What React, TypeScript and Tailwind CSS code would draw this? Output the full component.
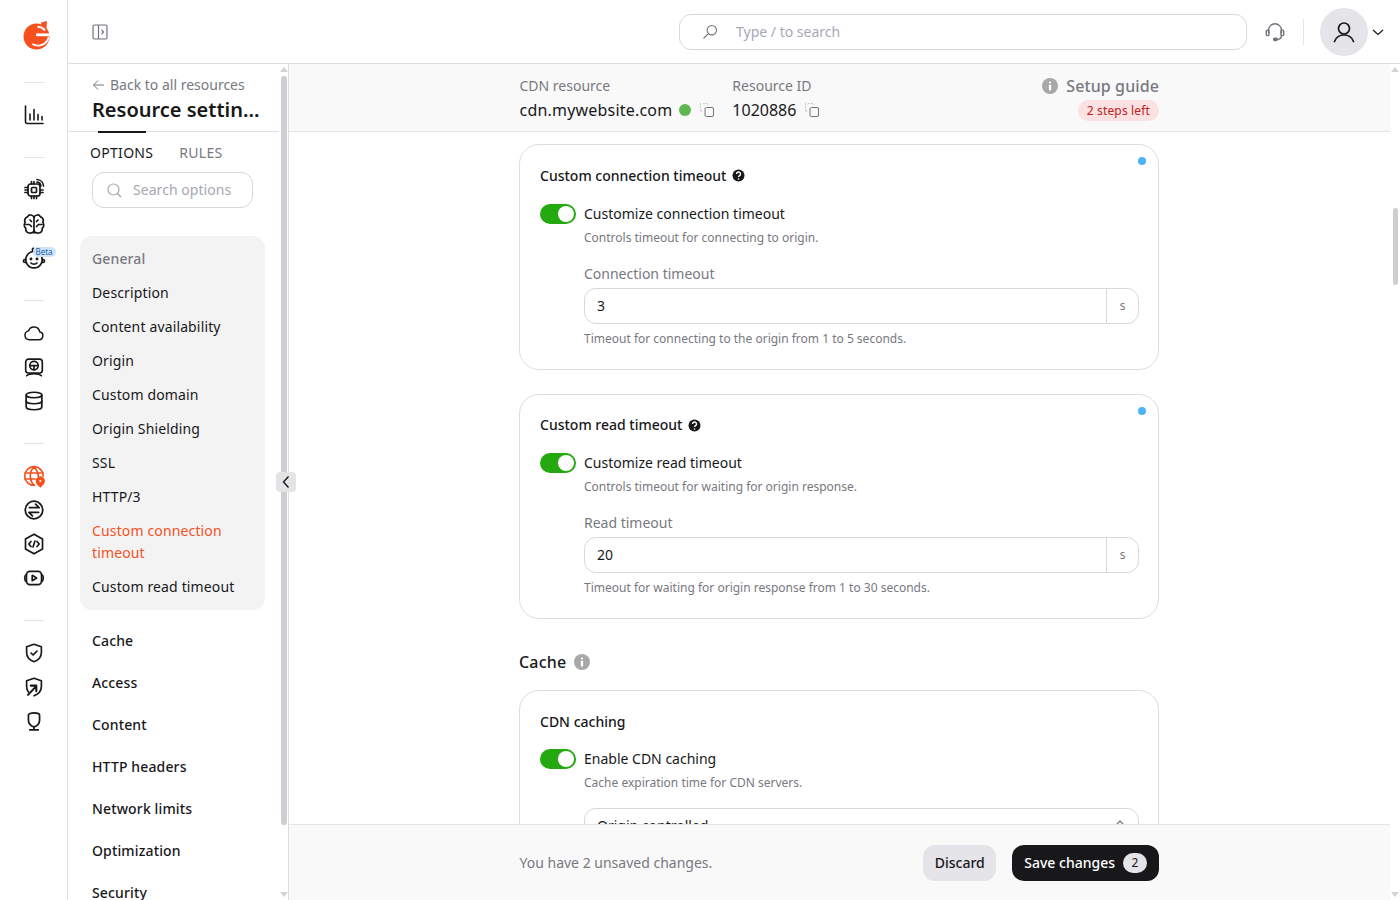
import React from "react";

const Ic = ({ children, size = 24, color = "#18181b", sw = 1.6, vb = "0 0 24 24" }: { children: React.ReactNode; size?: number; color?: string; sw?: number; vb?: string }) => (
  <svg width={size} height={size} viewBox={vb} fill="none" stroke={color} strokeWidth={sw} strokeLinecap="round" strokeLinejoin="round">
    {children}
  </svg>
);

const Divider = () => <div className="w-5 h-px bg-[#e4e4e7]" />;

const Logo = () => (
  <svg width="27" height="30" viewBox="0 0 27 30">
    <circle cx="13.500" cy="16.500" r="13" fill="#f4511e" />
    <path d="M18 2.500l6-1.500-.5 7-5-2.500z" fill="#f4511e" />
    <path d="M22 10.500c-2-2.500-4.500-3.800-7.500-3.800" fill="none" stroke="#fff" strokeWidth="2" />
    <path d="M13 14.800h14" fill="none" stroke="#fff" strokeWidth="2.800" />
    <path d="M25.800 17c-1.300 4.800-5 8-9.700 8.600-2.500.3-4.700-.2-6.800-1.500" fill="none" stroke="#fff" strokeWidth="1.800" />
  </svg>
);

const Chart = () => <Ic><path d="M3.500 3v15.500a2 2 0 0 0 2 2H21" /><path d="M8 11v6M12 6.500V17M16 11.500V17M20 13.500V17" /></Ic>;
const Chip = () => (
  <Ic sw={1.7}>
    <rect x="6" y="7" width="12" height="12" rx="2.500" />
    <rect x="9.500" y="10.500" width="5" height="5" rx="1" />
    <path d="M3 10.500h3M3 13h3M3 15.500h3M18 13h3M18 15.500h3M9.500 19v2.500M12 19v2.500M14.500 19v2.500M9.500 4.500V7M12 4.500V7" />
    <path d="M15 2.500a7 7 0 0 1 6.500 6.500M15 5.200a4.200 4.200 0 0 1 3.800 3.800" />
  </Ic>
);
const Brain = () => (
  <Ic sw={1.7} vb="0 -0.500 24 24">
    <path d="M12 4.500v16" />
    <path d="M12 5a3.500 3.500 0 0 0-6.500-.6A3.800 3.800 0 0 0 3.200 10a4 4 0 0 0 .6 5.800 3.800 3.800 0 0 0 3.400 4.700c2 .2 4.800-.4 4.800-2.500" />
    <path d="M12 5a3.500 3.500 0 0 1 6.500-.6 3.800 3.800 0 0 1 2.300 5.600 4 4 0 0 1-.6 5.800 3.800 3.800 0 0 1-3.400 4.700c-2 .2-4.800-.4-4.800-2.500" />
    <path d="M4 12h3.500l2 2M20 12h-3.500l-2 2M8 7.500l1.500 1.500M16 7.500 14.500 9" />
  </Ic>
);
const Baby = () => (
  <Ic sw={1.7}>
    <path d="M12 5.500a8.200 8.200 0 1 1-.01 0z" />
    <path d="M3.800 13.500H3a1 1 0 0 0 0 3h1M20.200 13.500h.8a1 1 0 0 1 0 3h-1" />
    <path d="M12 5.500c-1.800-.5-2.200-2.500-.8-3.300" />
    <path d="M9 17c1.500 1.600 4.500 1.600 6 0" />
    <circle cx="9" cy="13" r=".6" fill="#18181b" />
    <circle cx="15" cy="13" r=".6" fill="#18181b" />
  </Ic>
);
const Cloud = () => <Ic vb="-1.500 -2 27 27" sw={1.7}><path d="M7 19h10.500a4.500 4.500 0 0 0 .9-8.900 6.500 6.500 0 0 0-12.500-1A5 5 0 0 0 7 19z" /></Ic>;
const Monitor = () => (
  <Ic sw={1.8} vb="-1 -1 26 26">
    <rect x="3" y="3.500" width="18" height="15" rx="3" />
    <circle cx="12" cy="10.500" r="4.600" />
    <path d="M7.600 10.500h8.800M12 10.500v4.600" />
    <path d="M4 21.500c2-2 4-2.400 8-2.400s6 .4 8 2.400" />
  </Ic>
);
const Db = () => (
  <Ic sw={1.8} vb="-1 -1 26 26">
    <ellipse cx="12" cy="5.500" rx="8.500" ry="3" />
    <path d="M3.500 5.500v13c0 1.700 3.800 3 8.500 3s8.500-1.300 8.500-3v-13" />
    <path d="M3.500 12c0 1.700 3.800 3 8.500 3s8.500-1.300 8.500-3" />
  </Ic>
);
const Globe = () => (
  <Ic color="#f4511e" sw={1.7}>
    <path d="M12.500 21.200A9.300 9.300 0 1 1 21.300 12" />
    <path d="M3 9h18M3 15h10M12 2.700c-5 5.500-5 13 0 18.600M12 2.700c3 3.300 4.300 7 4.400 9.800" />
    <path d="M18.300 22.500s-3.800-3-3.800-5.500a3.800 3.800 0 0 1 7.600 0c0 2.500-3.800 5.500-3.800 5.500z" fill="#f4511e" />
    <circle cx="18.300" cy="17" r="1.100" fill="#fff" stroke="none" />
  </Ic>
);
const Swap = () => (
  <Ic sw={1.9} vb="-1 -1 26 26">
    <circle cx="12" cy="12" r="9.500" />
    <path d="M7 9.500h10.500l-3.800-3.800M17 14.500H6.500l3.800 3.800" />
  </Ic>
);
const Hex = () => (
  <Ic sw={1.7}>
    <path d="M12 2.200l8.500 4.900v9.800L12 21.800l-8.500-4.900V7.100z" />
    <path d="M9 9.500 6.800 12 9 14.500M15 9.500l2.200 2.500-2.200 2.500M13 9l-2 6" />
  </Ic>
);
const Play = () => (
  <Ic sw={1.9} vb="-1.500 -1.500 27 27">
    <rect x="3.500" y="4.500" width="17" height="15" rx="4" />
    <path d="M3.500 8C1.800 9 1.500 10.500 1.500 12s.3 3 2 4M20.500 8c1.700 1 2 2.500 2 4s-.3 3-2 4" />
    <path d="M10 9v6l5-3z" />
  </Ic>
);
const ShieldCheck = () => (
  <Ic sw={1.8} vb="-1 -1 26 26">
    <path d="M12 2.500l8 2.800v6.200c0 5-3.500 8.300-8 10-4.500-1.700-8-5-8-10V5.300z" />
    <path d="M8.800 12l2.200 2.200 4.200-4.200" />
  </Ic>
);
const ShieldArrow = () => (
  <Ic sw={1.8} vb="-1 -1 26 26">
    <path d="M6 17.500c-1.300-1.500-2-3.500-2-6V5.300l8-2.800 8 2.800v6.200c0 5-3.500 8.300-8 10" />
    <path d="M5.500 20.500 14.500 11M8.500 10.500h6v6" strokeWidth="2.200" />
  </Ic>
);
const Bulb = () => (
  <Ic sw={2} vb="-2 -2 28 28">
    <path d="M12 2.500c3.500 0 6.500 1.200 6.500 2.500v6c0 4-3 6.500-6.500 8-3.500-1.500-6.500-4-6.500-8V5c0-1.300 3-2.500 6.500-2.500z" />
    <path d="M12 19v3M7 22.300h10" />
  </Ic>
);
const Copy = () => (
  <svg width="16" height="16" viewBox="0 0 16 16" fill="none" stroke="#a1a1aa" strokeWidth="1">
    <rect x="6" y="5.500" width="8.500" height="9" rx="1.500" stroke="#71717a" />
    <path d="M1.500 2.500v-1h1M4.500 1.500h1M7.500 1.500h1.500v1M1.500 4.500v1M1.500 7.500v1.500h1.500" strokeDasharray="1 1" />
  </svg>
);
const Help = () => (
  <svg width="13" height="13" viewBox="0 0 13 13">
    <circle cx="6.500" cy="6.500" r="6" fill="#18181b" />
    <path d="M4.500 5a2 2 0 1 1 3 1.700c-.7.4-1 .7-1 1.400" fill="none" stroke="#fff" strokeWidth="1.400" />
    <circle cx="6.500" cy="10" r=".8" fill="#fff" />
  </svg>
);
const Info = ({ size = 16 }: { size?: number }) => (
  <svg width={size} height={size} viewBox="0 0 16 16">
    <circle cx="8" cy="8" r="8" fill="#a8a8a8" />
    <circle cx="8" cy="4.500" r="1.100" fill="#fff" />
    <rect x="6.900" y="6.800" width="2.200" height="5.800" rx=".5" fill="#fff" />
  </svg>
);

const Toggle = () => (
  <div className="w-9 h-5 rounded-full bg-[#25a910] flex items-center justify-end pr-0.5 shrink-0">
    <div className="w-4 h-4 rounded-full bg-white" />
  </div>
);

const Card = ({ title, label, desc, fieldLabel, value, hint }: { title: string; label: string; desc: string; fieldLabel: string; value: string; hint: string }) => (
  <section className="relative h-[225.500px] shrink-0 rounded-[20px] border border-[#dedee2] bg-white pl-5 pr-[19px] pt-[20.500px]">
    <div className="absolute right-3 top-3 w-2 h-2 rounded-full bg-[#4cb3f5]" />
    <div className="flex items-center gap-[6px] h-5 text-sm font-medium text-[#18181b]">
      {title} <Help />
    </div>
    <div className="flex items-center gap-2 mt-[18px] h-5 text-sm text-[#18181b]">
      <Toggle /> {label}
    </div>
    <div className="ml-11 mt-[6px] text-xs leading-4 text-[#78787f]">{desc}</div>
    <div className="ml-11 mt-[18px] text-sm leading-5 text-[#78787f]">{fieldLabel}</div>
    <div className="ml-11 mt-1 h-9 flex rounded-xl border border-[#d8d8dc] text-sm text-[#18181b]">
      <div className="flex-1 flex items-center pl-3">{value}</div>
      <div className="w-8 flex items-center justify-center border-l border-[#d8d8dc] text-xs text-[#78787f]">s</div>
    </div>
    <div className="ml-11 mt-[7px] text-xs leading-4 text-[#78787f]">{hint}</div>
  </section>
);

const Rail = () => (
  <aside className="w-[68px] shrink-0 h-full border-r border-[#dedee2] flex flex-col items-center bg-white">
    <div className="pt-[20px] h-[82px] pl-[5px]"><Logo /></div>
    <Divider />
    <div className="mt-5 h-6"><Chart /></div>
    <div className="mt-[30px]"><Divider /></div>
    <div className="mt-[19px] flex flex-col gap-[10.500px] relative">
      <Chip />
      <Brain />
      <Baby />
      <span className="absolute left-[11px] top-[70px] px-[3px] h-[10px] leading-[10px] rounded-full bg-[#cfe4fb] text-[8px] text-[#1e5fa8]">Beta</span>
    </div>
    <div className="mt-[30px]"><Divider /></div>
    <div className="mt-5 flex flex-col gap-[10px]">
      <Cloud />
      <Monitor />
      <Db />
    </div>
    <div className="mt-[30px]"><Divider /></div>
    <div className="mt-5 flex flex-col gap-[10px]">
      <Globe />
      <Swap />
      <Hex />
      <Play />
    </div>
    <div className="mt-[30px]"><Divider /></div>
    <div className="mt-5 flex flex-col gap-[10px]">
      <ShieldCheck />
      <ShieldArrow />
      <Bulb />
    </div>
  </aside>
);

const general = ["Description", "Content availability", "Origin", "Custom domain", "Origin Shielding", "SSL", "HTTP/3"];
const others = ["Cache", "Access", "Content", "HTTP headers", "Network limits", "Optimization", "Security"];

const Sidebar = () => (
  <div className="relative w-[221px] shrink-0 h-full border-r border-[#dedee2] flex overflow-visible">
    <div className="w-[211px] shrink-0 h-full overflow-hidden">
      <div className="h-[68px] pl-6 pt-3 border-b border-[#dedee2] w-[211px]">
        <div className="flex items-center gap-[5px] text-sm leading-[18px] text-[#78787f]">
          <svg width="13" height="12" viewBox="0 0 13 12" fill="none" stroke="#78787f" strokeWidth="1"><path d="M12 6H1.500M6 1.500 1.500 6 6 10.500" /></svg>
          Back to all resources
        </div>
        <div className="text-xl leading-[30px] font-semibold text-[#18181b] mt-[1px]">Resource settin...</div>
      </div>
      <div className="relative flex gap-[26px] pl-[22px] pt-[11px] text-sm leading-5 tracking-[0.3px]">
        <div className="absolute left-[30px] -top-[1px] w-12 h-0.5 bg-[#18181b]" />
        <span className="text-[#18181b]">OPTIONS</span>
        <span className="text-[#78787f]">RULES</span>
      </div>
      <div className="ml-6 mt-[9px] w-[161px] h-9 rounded-xl border border-[#d8d8dc] flex items-center pl-[14px] gap-[11px] text-sm tracking-[0.05px] text-[#a8a8b2]">
        <svg width="15" height="15" viewBox="0 0 15 15" fill="none" stroke="#a8a8b2" strokeWidth="1.200"><circle cx="6.500" cy="6.500" r="5.500" /><path d="M10.500 10.500 14 14" /></svg>
        Search options
      </div>
      <div className="ml-3 mt-7 w-[185px] rounded-xl bg-[#f3f3f4] px-3 pt-3 text-sm tracking-[0.14px]">
        <div className="h-[22px] leading-[22px] font-medium text-[#78787f]">General</div>
        {general.map((g) => (
          <div key={g} className="mt-3 h-[22px] leading-[22px] text-[#18181b]">{g}</div>
        ))}
        <div className="mt-3 leading-[22px] text-[#f4511e]">Custom connection timeout</div>
        <div className="mt-3 h-[22px] leading-[22px] text-[#18181b]">Custom read timeout</div>
        <div className="h-3" />
      </div>
      <div className="pl-6 mt-5 text-sm tracking-[0.14px]">
        {others.map((o) => (
          <div key={o} className="mb-5 h-[22px] leading-[22px] font-medium text-[#18181b]">{o}</div>
        ))}
      </div>
    </div>
    <div className="w-[9px] h-full flex flex-col items-center pt-[3px]">
      <div className="w-0 h-0 border-x-[4px] border-x-transparent border-b-[5px] border-b-[#d4d4d8]" />
      <div className="w-[6px] h-[749px] mt-1 rounded-full bg-[#cdcdd2]" />
      <div className="mt-auto mb-[3px] w-0 h-0 border-x-[4px] border-x-transparent border-t-[5px] border-t-[#d4d4d8]" />
    </div>
    <div className="absolute right-[-8px] top-[408px] w-5 h-5 rounded bg-[#e4e4e7] flex items-center justify-center z-10">
      <svg width="10" height="14" viewBox="0 0 10 14" fill="none" stroke="#18181b" strokeWidth="1.400"><path d="M7.500 1.500 2.500 7l5 5.500" /></svg>
    </div>
  </div>
);

export default function App() {
  return (
    <div className="w-[1400px] h-[900px] flex overflow-hidden bg-white font-['Noto_Sans','Liberation_Sans',sans-serif]">
      <Rail />
      <div className="flex-1 min-w-0 h-full flex flex-col">
        <header className="h-[64px] shrink-0 border-b border-[#dedee2] flex items-center">
          <div className="pl-6">
            <svg width="16" height="16" viewBox="0 0 16 16" fill="none" stroke="#71717a" strokeWidth="1.200"><rect x="1" y="1" width="14" height="14" rx="1.500" /><path d="M6.500 1v14M9.500 6l2 2-2 2" /></svg>
          </div>
          <div className="ml-[571px] mt-[1px] w-[568px] h-9 rounded-xl border border-[#d8d8dc] flex items-center pl-[22px] gap-[18px] text-sm text-[#a8a8b8]">
            <svg width="16" height="16" viewBox="0 0 16 16" fill="none" stroke="#71717a" strokeWidth="1.100"><circle cx="9.800" cy="6.200" r="4.700" /><path d="M6.300 9.700 1.500 14.500" /></svg>
            Type / to search
          </div>
          <div className="ml-[17px]">
            <Ic color="#71717a" size={22} sw={1.500}>
              <path d="M5 13V10a7 7 0 0 1 14 0v3" />
              <rect x="2.500" y="10" width="3" height="6" rx="1.200" />
              <rect x="18.500" y="10" width="3" height="6" rx="1.200" />
              <path d="M19 16c0 2.500-2 4-5 4" />
              <rect x="10.500" y="18.800" width="4" height="2.500" rx="1.200" fill="#71717a" />
            </Ic>
          </div>
          <div className="ml-[17px] w-px h-[26px] bg-[#e4e4e7]" />
          <div className="ml-4 w-12 h-12 rounded-full bg-[#e4e4e9] flex items-center justify-center">
            <Ic size={24} sw={1.700}>
              <circle cx="12" cy="8.500" r="5.500" />
              <path d="M2.500 21.500c1.500-4 5-6.500 9.500-6.500s8 2.500 9.500 6.500" />
            </Ic>
          </div>
          <svg className="ml-[3px]" width="14" height="14" viewBox="0 0 14 14" fill="none" stroke="#18181b" strokeWidth="1.200"><path d="M2 5l5 4.500L12 5" /></svg>
        </header>
        <div className="flex-1 min-h-0 flex">
          <Sidebar />
          <main className="flex-1 min-w-0 h-full flex flex-col">
            <div className="h-[68px] shrink-0 bg-[#f9f9f9] border-b border-[#e4e4e7] pl-[230.500px] pr-[231px] flex justify-between">
              <div className="flex gap-[17px] pt-[12px]">
                <div>
                  <div className="text-sm leading-5 text-[#78787f]">CDN resource</div>
                  <div className="flex items-center text-base leading-6 text-[#18181b] mt-[2px]">
                    <span className="tracking-[0.2px]">cdn.mywebsite.com</span>
                    <span className="ml-[7px] w-3 h-3 rounded-full bg-[#5cb84f]" />
                    <span className="ml-2 -mt-[1px]"><Copy /></span>
                  </div>
                </div>
                <div>
                  <div className="text-sm leading-5 text-[#78787f]">Resource ID</div>
                  <div className="flex items-center text-base leading-6 text-[#18181b] mt-[2px]">
                    1020886
                    <span className="ml-2 -mt-[1px]"><Copy /></span>
                  </div>
                </div>
              </div>
              <div className="flex flex-col items-end pt-[10px]">
                <div className="flex items-center gap-[8px] text-base leading-6 font-medium tracking-[0.1px] text-[#78787f]"><Info /> Setup guide</div>
                <div className="mt-[2px] px-[9px] h-[21px] leading-[21px] rounded-full bg-[#fbe1e1] text-xs tracking-[0.15px] text-[#c01c1c]">2 steps left</div>
              </div>
            </div>
            <div className="flex-1 min-h-0 overflow-hidden pl-[230px] pr-[231px] pt-3 flex flex-col gap-6">
              <Card title="Custom connection timeout" label="Customize connection timeout" desc="Controls timeout for connecting to origin." fieldLabel="Connection timeout" value="3" hint="Timeout for connecting to the origin from 1 to 5 seconds." />
              <Card title="Custom read timeout" label="Customize read timeout" desc="Controls timeout for waiting for origin response." fieldLabel="Read timeout" value="20" hint="Timeout for waiting for origin response from 1 to 30 seconds." />
              <div className="flex items-center gap-2 mt-[7px] -mb-2 h-6 text-base font-medium tracking-[0.2px] text-[#18181b] shrink-0">Cache <Info /></div>
              <section className="h-[260px] shrink-0 rounded-[20px] border border-[#dedee2] bg-white pl-5 pr-[19px] pt-[21px]">
                <div className="h-5 leading-5 text-sm font-medium text-[#18181b]">CDN caching</div>
                <div className="flex items-center gap-2 mt-[17px] h-5 text-sm text-[#18181b]"><Toggle /> Enable CDN caching</div>
                <div className="ml-11 mt-[6px] text-xs leading-4 text-[#78787f]">Cache expiration time for CDN servers.</div>
                <div className="ml-11 mt-[17px] h-9 rounded-xl border border-[#d8d8dc] flex items-center justify-between pl-3 pr-3 text-sm text-[#18181b]">
                  Origin controlled
                  <svg width="12" height="16" viewBox="0 0 12 16" fill="none" stroke="#71717a" strokeWidth="1.200"><path d="M3 6l3-3 3 3M3 10l3 3 3-3" /></svg>
                </div>
              </section>
            </div>
            <div className="h-[76px] shrink-0 bg-[#f9f9f9] border-t border-[#e4e4e7] pl-[230.500px] pr-[231px] flex items-center justify-between">
              <span className="text-sm text-[#78787f]">You have 2 unsaved changes.</span>
              <div className="flex items-center gap-4">
                <button className="h-9 px-[11.500px] rounded-xl bg-[#e4e4e9] text-sm font-medium text-[#18181b]">Discard</button>
                <button className="h-9 pl-3 pr-[12px] rounded-xl bg-[#18181b] text-sm font-medium text-white flex items-center gap-2">
                  Save changes
                  <span className="w-[24px] h-[20px] rounded-full bg-[#e4e4e9] text-xs font-normal text-[#18181b] flex items-center justify-center">2</span>
                </button>
              </div>
            </div>
          </main>
          <div className="w-[10px] shrink-0 h-full flex flex-col items-center pt-[3px] bg-white">
            <div className="w-0 h-0 border-x-[4px] border-x-transparent border-b-[5px] border-b-[#d4d4d8]" />
            <div className="w-[5px] h-[77px] mt-[136px] rounded-full bg-[#cdcdd2]" />
            <div className="mt-auto mb-[3px] w-0 h-0 border-x-[4px] border-x-transparent border-t-[5px] border-t-[#d4d4d8]" />
          </div>
        </div>
      </div>
    </div>
  );
}
